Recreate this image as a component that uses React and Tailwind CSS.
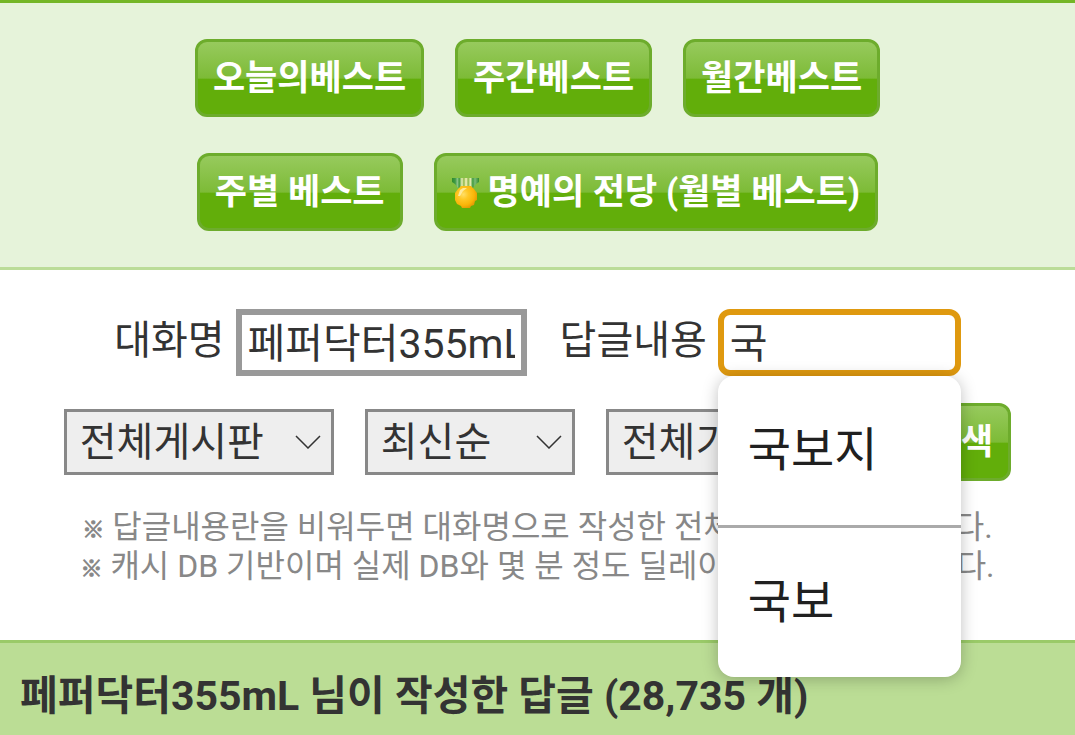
import { useState } from "react";
import clsx from "clsx";

const bestRows = [
  [{ label: "오늘의베스트" }, { label: "주간베스트" }, { label: "월간베스트" }],
  [{ label: "주별 베스트" }, { label: "명예의 전당 (월별 베스트)", medal: true }],
];

const notes = [
  "답글내용란을 비워두면 대화명으로 작성한 전체 답글을 검색합니다.",
  "캐시 DB 기반이며 실제 DB와 몇 분 정도 딜레이가 있을 수 있습니다.",
];

const suggestions = ["국보지", "국보"];

const MedalIcon = () => (
  <svg viewBox="0 0 28 30" className="w-7 h-[30px] shrink-0" aria-hidden="true">
    <defs>
      <linearGradient id="ribbon">
        <stop offset="0" stopColor="#2f8c2c" />
        <stop offset="0.12" stopColor="#3f9a45" />
        <stop offset="0.2" stopColor="#8cc488" />
        <stop offset="0.27" stopColor="#3f9a3c" />
        <stop offset="0.37" stopColor="#e9efb4" />
        <stop offset="0.44" stopColor="#8cb648" />
        <stop offset="0.52" stopColor="#fbf7c0" />
        <stop offset="0.6" stopColor="#8cb648" />
        <stop offset="0.68" stopColor="#e9efb4" />
        <stop offset="0.77" stopColor="#3f9a3c" />
        <stop offset="0.85" stopColor="#7dbc78" />
        <stop offset="1" stopColor="#2f8c2c" />
      </linearGradient>
      <radialGradient id="coin" cx="0.38" cy="0.38" r="0.66">
        <stop offset="0" stopColor="#ffdf68" />
        <stop offset="0.35" stopColor="#ffc826" />
        <stop offset="0.75" stopColor="#f9b508" />
        <stop offset="1" stopColor="#e39704" />
      </radialGradient>
    </defs>
    {/* Ribbon */}
    <path d="M0 0h27v4l-3 2-3 4H6L3 6 0 4z" fill="url(#ribbon)" />
    {/* Coin */}
    <path
      d="M9 8h10l3 3 3 4v7l-2 1-1 4-3 1-1 2h-8l-1-2-4-2-2-4v-7l3-4z"
      fill="url(#coin)"
    />
    <path d="M8 12l3-2h4l-4 3-3 5H6z" fill="#fff3bd" opacity="0.75" />
  </svg>
);

const GreenButton = ({ children, type = "button" }) => (
  <button
    type={type}
    className="flex h-[78px] shrink-0 items-center gap-2 rounded-xl border-[3px] border-[#6dac2c] bg-[linear-gradient(to_bottom,#97ca5d_0%,#7dbb37_50%,#62ae0a_52%,#62ae0a_100%)] px-[15px] pt-0.5 text-[35px] leading-[40px] font-bold whitespace-nowrap text-white"
  >
    {children}
  </button>
);

const SelectBox = ({ label, options, className }) => (
  <div className={clsx("relative h-[66px] shrink-0", className)}>
    <select
      aria-label={label}
      className="h-full w-full appearance-none border-[3px] border-[#888] bg-[#eee] pt-0.5 pl-[13px] text-[40px] leading-[56px] text-[#333]"
    >
      {options.map((option) => (
        <option key={option}>{option}</option>
      ))}
    </select>
    <svg
      viewBox="0 0 26 14"
      className="pointer-events-none absolute top-[26px] right-[13px] h-[14px] w-[26px]"
      aria-hidden="true"
    >
      <path d="M1 1l12 12L25 1" fill="none" stroke="#333" strokeWidth="1.5" />
    </svg>
  </div>
);

const App = () => {
  const [nickname, setNickname] = useState("페퍼닥터355mL");
  const [content, setContent] = useState("국");

  return (
    <div className="min-h-screen overflow-x-hidden bg-[#bbdd95] font-[Roboto,'Noto_Sans_CJK_KR',sans-serif] text-[#333]">
      {/* Best links */}
      <nav className="flex flex-col gap-9 border-t-[3px] border-b-[3px] border-t-[#74b626] border-b-[#bbdc98] bg-[#e6f3da] py-9">
        {bestRows.map((row, i) => (
          <div key={i} className="flex justify-center gap-[31px]">
            {row.map((item) => (
              <GreenButton key={item.label}>
                {item.medal && <MedalIcon />}
                {item.label}
              </GreenButton>
            ))}
          </div>
        ))}
      </nav>

      {/* Search form */}
      <form
        className="bg-white pt-[39px] pb-[54px]"
        onSubmit={(e) => e.preventDefault()}
      >
        <div className="flex items-center justify-center gap-[33px]">
          <div className="flex items-center gap-[11px]">
            <label htmlFor="nickname" className="pb-1 text-[40px] leading-[56px] whitespace-nowrap">
              대화명
            </label>
            <input
              id="nickname"
              type="text"
              value={nickname}
              onChange={(e) => setNickname(e.target.value)}
              className="h-[67px] w-[291px] border-[6px] border-[#999] bg-white px-1.5 pb-1.5 text-[41px] outline-none"
            />
          </div>
          <div className="flex items-center gap-[11px]">
            <label htmlFor="content" className="pb-1 text-[40px] leading-[56px] whitespace-nowrap">
              답글내용
            </label>
            <div className="relative">
              <input
                id="content"
                type="text"
                autoComplete="off"
                value={content}
                onChange={(e) => setContent(e.target.value)}
                className="block h-[67px] w-[243px] rounded-xl border-[6px] border-[#df990f] bg-white px-1.5 pb-1.5 text-[41px] outline-none"
              />
              {/* Autocomplete */}
              <ul className="absolute top-full left-0 z-10 w-full divide-y-[3px] divide-[#aaa] rounded-2xl bg-white shadow-[0_2px_16px_rgba(0,0,0,0.25)]">
                {suggestions.map((word) => (
                  <li key={word}>
                    <button
                      type="button"
                      onClick={() => setContent(word)}
                      className="block h-[149px] w-full px-[30px] pb-0.5 text-left text-[47px] leading-[64px] text-[#202020]"
                    >
                      {word}
                    </button>
                  </li>
                ))}
              </ul>
            </div>
          </div>
        </div>

        <div className="mt-[27px] flex items-center justify-center gap-[31px]">
          <SelectBox label="게시판" options={["전체게시판"]} className="w-[270px]" />
          <SelectBox label="정렬" options={["최신순"]} className="w-[210px]" />
          <SelectBox label="기간" options={["전체기간"]} className="w-[274px]" />
          <GreenButton type="submit">검색</GreenButton>
        </div>

        <div className="mt-[27px] text-center text-[32px] leading-[39px] whitespace-nowrap text-[#888]">
          {notes.map((note) => (
            <p key={note}>
              <span className="align-middle text-[22px] leading-none font-bold [-webkit-text-stroke:1px_#888]">
                ※
              </span>{" "}
              {note}
            </p>
          ))}
        </div>
      </form>

      {/* Result heading */}
      <h1 className="border-t-[3px] border-[#9aca68] px-5 pt-[25px] pb-2.5 text-[41px] leading-[56px] font-bold whitespace-nowrap">
        페퍼닥터355mL 님이 작성한 답글 (28,735 개)
      </h1>
    </div>
  );
};

export default App;
